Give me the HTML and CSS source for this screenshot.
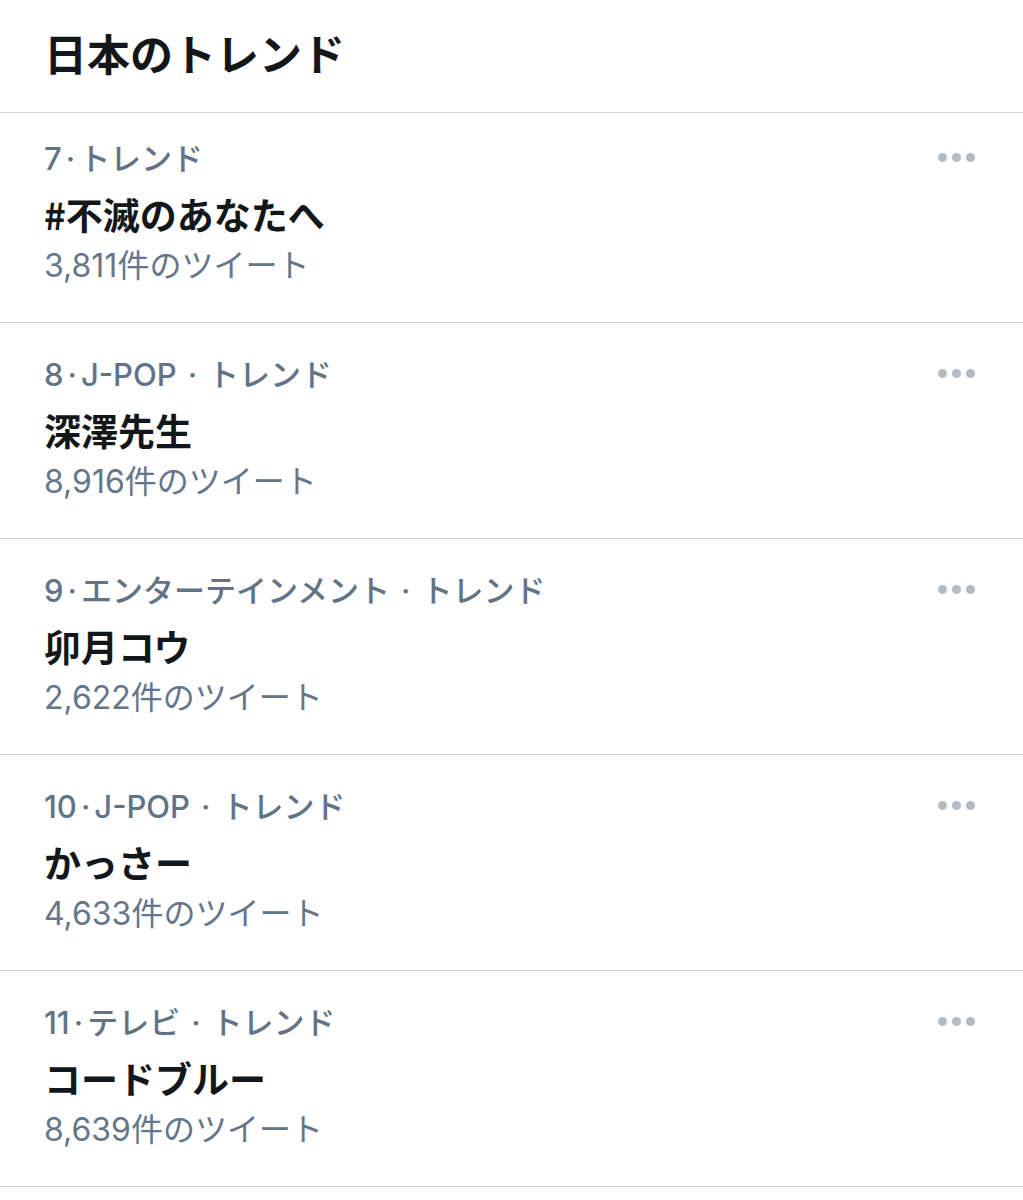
FILE: index.html
```html
<!DOCTYPE html>
<html lang="ja">
<head>
    <meta charset="UTF-8">
    <meta name="viewport" content="width=device-width, initial-scale=1.0">
    <title>日本のトレンド</title>
    <link rel="stylesheet" href="styles.css">
</head>
<body>
    <div class="trends">
        <h2 class="trends-title">日本のトレンド</h2>

        <div class="trend">
            <div class="trend-body">
                <div class="trend-meta">7<span class="dot">·</span>トレンド</div>
                <div class="trend-name">#不滅のあなたへ</div>
                <div class="trend-count">3,811件のツイート</div>
            </div>
            <div class="more"><span></span><span></span><span></span></div>
        </div>

        <div class="trend">
            <div class="trend-body">
                <div class="trend-meta">8<span class="dot">·</span>J-POP<span class="sep">·</span>トレンド</div>
                <div class="trend-name">深澤先生</div>
                <div class="trend-count">8,916件のツイート</div>
            </div>
            <div class="more"><span></span><span></span><span></span></div>
        </div>

        <div class="trend">
            <div class="trend-body">
                <div class="trend-meta">9<span class="dot">·</span>エンターテインメント<span class="sep">·</span>トレンド</div>
                <div class="trend-name">卯月コウ</div>
                <div class="trend-count">2,622件のツイート</div>
            </div>
            <div class="more"><span></span><span></span><span></span></div>
        </div>

        <div class="trend">
            <div class="trend-body">
                <div class="trend-meta">10<span class="dot">·</span>J-POP<span class="sep">·</span>トレンド</div>
                <div class="trend-name">かっさー</div>
                <div class="trend-count">4,633件のツイート</div>
            </div>
            <div class="more"><span></span><span></span><span></span></div>
        </div>

        <div class="trend">
            <div class="trend-body">
                <div class="trend-meta">11<span class="dot">·</span>テレビ<span class="sep">·</span>トレンド</div>
                <div class="trend-name">コードブルー</div>
                <div class="trend-count">8,639件のツイート</div>
            </div>
            <div class="more"><span></span><span></span><span></span></div>
        </div>
    </div>
</body>
</html>
```

FILE: styles.css
```css
body {
    margin: 0;
    background: #fff;
    font-family: "Inter", "Noto Sans CJK JP", sans-serif;
    color: #14171a;
}

.trends-title {
    margin: 0;
    padding: 22px 44px 30px;
    font-family: "Noto Sans CJK JP", sans-serif;
    font-size: 43px;
    line-height: 60px;
    font-weight: 700;
    border-bottom: 1px solid #d3d3d3;
}

.trend {
    display: flex;
    justify-content: space-between;
    align-items: flex-start;
    padding: 28px 48px 35px 44px;
    border-bottom: 1px solid #d3d3d3;
}

.trend:first-of-type {
    padding-top: 22px;
}

.trend-meta {
    font-size: 31px;
    line-height: 48px;
    font-weight: 500;
    color: #627386;
}

.trend-meta .dot,
.trend-meta .sep {
    font-family: "Inter", sans-serif;
}

.trend-meta .dot {
    margin: 0 4px;
}

.trend-meta .sep {
    margin: 0 11px;
}

.trend-name {
    font-family: "Noto Sans CJK JP", sans-serif;
    font-size: 37px;
    line-height: 62px;
    font-weight: 700;
}

.trend-count {
    font-size: 32px;
    line-height: 42px;
    color: #66768a;
}

.more {
    display: flex;
    gap: 5px;
    padding-top: 18px;
}

.more span {
    width: 9px;
    height: 9px;
    border-radius: 50%;
    background: #b3bcc6;
}
```
